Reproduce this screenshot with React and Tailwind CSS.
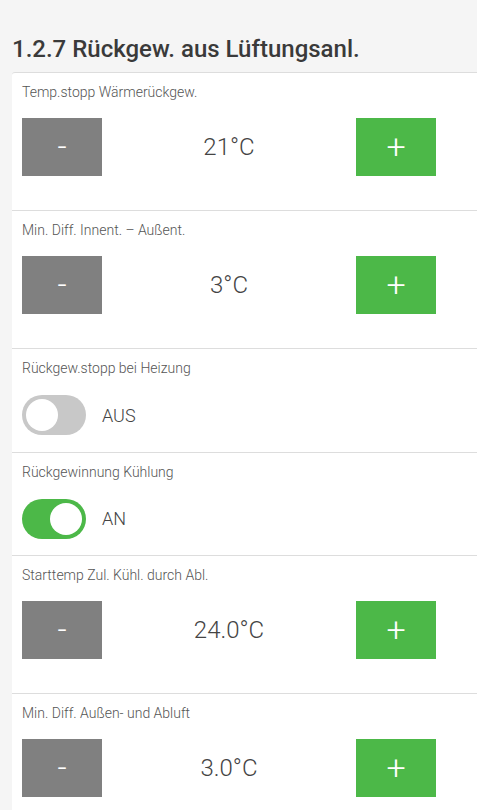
import React from 'react'

const items = [
  { type: 'step', label: 'Temp.stopp Wärmerückgew.', value: '21°C' },
  { type: 'step', label: 'Min. Diff. Innent. – Außent.', value: '3°C' },
  { type: 'toggle', label: 'Rückgew.stopp bei Heizung', on: false },
  { type: 'toggle', label: 'Rückgewinnung Kühlung', on: true },
  { type: 'step', label: 'Starttemp Zul. Kühl. durch Abl.', value: '24.0°C' },
  { type: 'step', label: 'Min. Diff. Außen- und Abluft', value: '3.0°C' },
]

const Stepper = ({ value }) => (
  <div className="flex items-center mt-[17px] pr-[41px]">
    <button className="w-[80px] h-[58px] bg-[#808080] text-white text-[32px] font-light leading-none flex items-center justify-center pb-[3px]">
      -
    </button>
    <div className="flex-1 text-center text-[24px] font-light text-[#444]">{value}</div>
    <button className="w-[80px] h-[58px] bg-[#4cb848] text-white text-[34px] font-light leading-none flex items-center justify-center pb-[3px]">
      +
    </button>
  </div>
)

const Toggle = ({ on }) => (
  <div className="flex items-center mt-[18px] mb-[16.5px]">
    <div className={`w-[64px] h-[40px] rounded-full p-[4px] flex ${on ? 'bg-[#4cb848] justify-end' : 'bg-[#c8c8c8] justify-start'}`}>
      <div className="w-[32px] h-[32px] rounded-full bg-white" />
    </div>
    <span className="ml-[16px] text-[18px] font-light text-[#444]">{on ? 'AN' : 'AUS'}</span>
  </div>
)

export default function App() {
  return (
    <div className="min-h-screen bg-[#f5f5f5]" style={{ fontFamily: 'Roboto, "Noto Sans", sans-serif' }}>
      <h1 className="pt-[35px] pl-[12px] text-[24px] leading-[28px] font-medium text-[#3a3a3a] mb-[9px]">
        1.2.7 Rückgew. aus Lüftungsanl.
      </h1>
      <div className="ml-[12px] bg-white border-t border-[#dddddd] rounded-tl-[3px]">
        {items.map((it, i) => (
          <div key={i} className={`pl-[10px] pt-[10px] ${i > 0 ? 'border-t border-[#dddddd]' : ''} ${it.type === 'step' ? 'pb-[34px]' : ''}`}>
            <p className="text-[14px] leading-[18px] font-light text-[#555]">{it.label}</p>
            {it.type === 'step' ? <Stepper value={it.value} /> : <Toggle on={it.on} />}
          </div>
        ))}
      </div>
    </div>
  )
}
